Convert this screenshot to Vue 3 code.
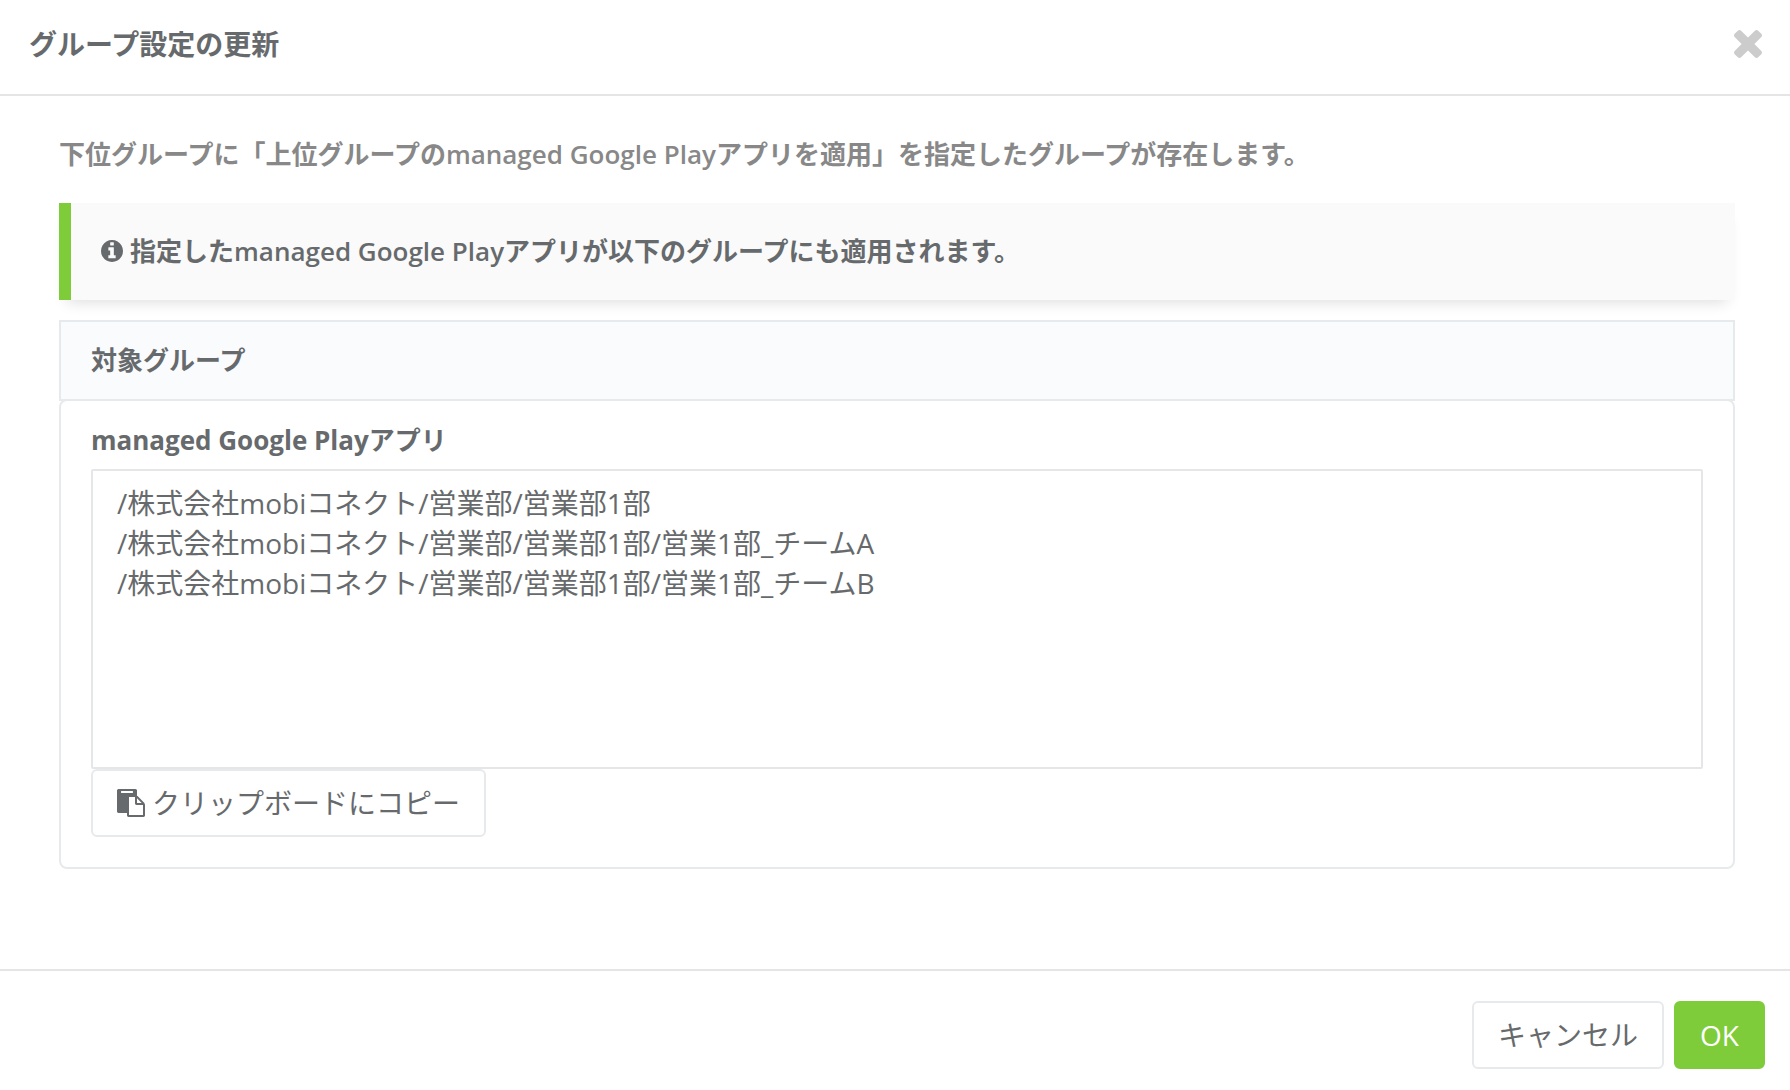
<script setup>
import { ref } from 'vue'

const groups = ref([
  '/株式会社mobiコネクト/営業部/営業部1部',
  '/株式会社mobiコネクト/営業部/営業部1部/営業1部_チームA',
  '/株式会社mobiコネクト/営業部/営業部1部/営業1部_チームB',
].join('\n'))
</script>

<template>
  <div class="modal" role="dialog" aria-labelledby="modal-title">
    <header class="modal-header">
      <h1 id="modal-title" class="title">グループ設定の更新</h1>
      <button type="button" class="close" aria-label="閉じる">
        <svg viewBox="302 366 1188 1188" width="28" height="28" aria-hidden="true">
          <path d="M1490 1322q0 40-28 68l-136 136q-28 28-68 28t-68-28l-294-294-294 294q-28 28-68 28t-68-28l-136-136q-28-28-28-68t28-68l294-294-294-294q-28-28-28-68t28-68l136-136q28-28 68-28t68 28l294 294 294-294q28-28 68-28t68 28l136 136q28 28 28 68t-28 68l-294 294 294 294q28 28 28 68z" />
        </svg>
      </button>
    </header>

    <main class="modal-body">
      <p class="lead">下位グループに「上位グループのmanaged Google Playアプリを適用」を指定したグループが存在します。</p>

      <div class="notice">
        <svg viewBox="128 128 1536 1536" width="22" height="22" aria-hidden="true">
          <path d="M1152 1376v-160q0-14-9-23t-23-9h-96v-512q0-14-9-23t-23-9h-320q-14 0-23 9t-9 23v160q0 14 9 23t23 9h96v320h-96q-14 0-23 9t-9 23v160q0 14 9 23t23 9h448q14 0 23-9t9-23zM1024 480v-160q0-14-9-23t-23-9h-192q-14 0-23 9t-9 23v160q0 14 9 23t23 9h192q14 0 23-9t9-23zM1664 896q0 209-103 385.5t-279.5 279.5-385.5 103-385.5-103-279.5-279.5-103-385.5 103-385.5 279.5-279.5 385.5-103 385.5 103 279.5 279.5 103 385.5z" />
        </svg>
        <span>指定したmanaged Google Playアプリが以下のグループにも適用されます。</span>
      </div>

      <section>
        <h2 class="panel-title">対象グループ</h2>
        <div class="panel">
          <label for="groups" class="label">managed Google Playアプリ</label>
          <textarea id="groups" v-model="groups" class="groups" readonly spellcheck="false"></textarea>
          <button type="button" class="btn">
            <svg viewBox="0 0 1792 1792" width="28" height="28" aria-hidden="true">
              <path d="M768 1664h896v-640h-416q-40 0-68-28t-28-68v-416h-384v1152zM1024 224v-64q0-13-9.5-22.5t-22.5-9.5h-704q-13 0-22.5 9.5t-9.5 22.5v64q0 13 9.5 22.5t22.5 9.5h704q13 0 22.5-9.5t9.5-22.5zM1280 896h299l-299-299v299zM1792 1024v672q0 40-28 68t-68 28h-960q-40 0-68-28t-28-68v-160h-544q-40 0-68-28t-28-68v-1344q0-40 28-68t68-28h1088q40 0 68 28t28 68v328q21 13 36 28l408 408q28 28 48 76t20 88z" />
            </svg>
            <span>クリップボードにコピー</span>
          </button>
        </div>
      </section>
    </main>

    <footer class="modal-footer">
      <button type="button" class="btn">キャンセル</button>
      <button type="button" class="btn primary">OK</button>
    </footer>
  </div>
</template>

<style>
body {
  margin: 0;
  background: #fff;
}
</style>

<style scoped>
.modal,
.modal button,
.modal textarea {
  font-family: "Open Sans", "Noto Sans CJK JP", sans-serif;
  color: #676a6c;
}

.modal * {
  box-sizing: border-box;
}

svg {
  display: block;
  flex: none;
  fill: currentColor;
}

.modal-header {
  display: flex;
  align-items: center;
  justify-content: space-between;
  padding: 24px 28px 30px 29px;
  border-bottom: 2px solid #e5e5e5;
}

.title {
  margin: 0;
  font-size: 28px;
  line-height: 40px;
  font-weight: 600;
}

.modal .close {
  padding: 0;
  border: 0;
  background: none;
  color: #ccc;
}

.modal-body {
  padding: 38px 55px 100px 59px;
}

.lead {
  margin: 0 0 29px;
  font-size: 26px;
  line-height: 40px;
  font-weight: 600;
  color: #888;
}

.notice {
  display: flex;
  align-items: center;
  gap: 7px;
  margin-bottom: 20px;
  padding: 28px 30px 29px;
  border-left: 12px solid #7fcc3a;
  background: #fafafa;
  box-shadow: 0 10px 14px -8px rgba(0, 0, 0, 0.14);
  font-size: 26px;
  line-height: 40px;
  font-weight: 600;
}

.panel-title {
  margin: 0;
  padding: 18px 30px 19px;
  border: 2px solid #e7eaec;
  background: #fafbfd;
  font-size: 26px;
  line-height: 40px;
  font-weight: 600;
}

/* The panel's top border shares the title bar's bottom border. */
.panel {
  display: flex;
  flex-direction: column;
  align-items: flex-start;
  margin-top: -2px;
  padding: 20px 30px 30px;
  border: 2px solid #e7eaec;
  border-radius: 8px;
}

.label {
  margin-bottom: 10px;
  font-size: 26px;
  line-height: 38px;
  font-weight: 700;
}

.modal .groups {
  display: block;
  width: 100%;
  height: 300px;
  padding: 12px 24px;
  border: 2px solid #e5e6e7;
  border-radius: 2px;
  background: #fff;
  font-size: 28px;
  line-height: 40px;
  resize: none;
}

.modal .btn {
  display: flex;
  align-items: center;
  gap: 7px;
  padding: 12px 24px;
  border: 2px solid #e7eaec;
  border-radius: 6px;
  background: #fff;
  font-size: 28px;
  line-height: 40px;
}

.modal .primary {
  border-color: #7fcc3a;
  background: #7fcc3a;
  color: #fff;
}

.modal-footer {
  display: flex;
  justify-content: flex-end;
  gap: 10px;
  padding: 30px 25px 20px;
  border-top: 2px solid #e5e5e5;
}
</style>
